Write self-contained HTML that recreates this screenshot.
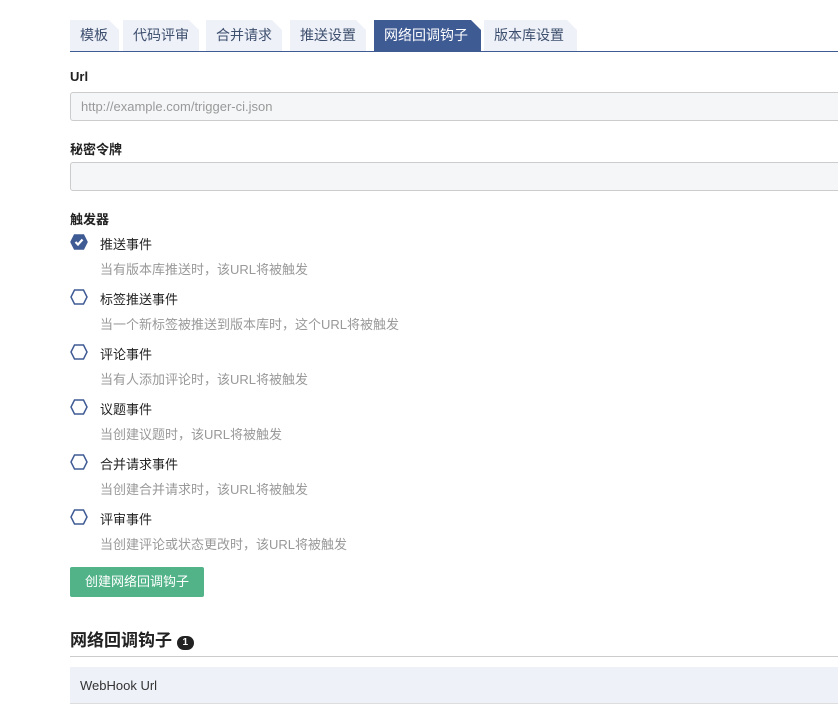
<!DOCTYPE html>
<html><head><meta charset="utf-8"><style>
body{margin:0;width:838px;height:713px;overflow:hidden;background:#fff;font-family:"Liberation Sans","Noto Sans CJK SC",sans-serif;color:#222;position:relative}
.a{position:absolute}
.tab{position:absolute;top:20px;height:31px;background:#eef1f8;color:#3d4f6e;font-size:14px;line-height:31px;padding-left:10px;box-sizing:border-box;clip-path:polygon(0 0,calc(100% - 10px) 0,100% 10px,100% 100%,0 100%)}
.tab.act{background:#3f5b94;color:#fff}
.lbl{position:absolute;left:70px;font-size:13px;font-weight:bold;color:#222}
.inp{position:absolute;left:70px;width:780px;height:29px;background:#f5f6f8;border:1px solid #ccc;border-radius:3px;box-sizing:border-box;font-size:13px;color:#999;line-height:27px;padding-left:10px}
.opt{position:absolute;left:100px;font-size:13px;color:#222}
.desc{position:absolute;left:100px;font-size:13px;color:#999}
.hex{position:absolute;left:70px}
</style></head><body>
<div class="tab" style="left:70px;width:49px">模板</div>
<div class="tab" style="left:123px;width:76px">代码评审</div>
<div class="tab" style="left:206px;width:76px">合并请求</div>
<div class="tab" style="left:290px;width:76px">推送设置</div>
<div class="tab act" style="left:374px;width:107px">网络回调钩子</div>
<div class="tab" style="left:484px;width:93px">版本库设置</div>
<div class="a" style="left:70px;top:51px;width:768px;height:1px;background:#3f5b94"></div>

<div class="lbl" style="top:69px">Url</div>
<div class="inp" style="top:92px">http://example.com/trigger-ci.json</div>
<div class="lbl" style="top:139px">秘密令牌</div>
<div class="inp" style="top:162px"></div>
<div class="lbl" style="top:209px">触发器</div>

<svg class="hex" style="top:234px" width="18" height="16" viewBox="0 0 18 16"><polygon points="4.5,1 13.5,1 17,8 13.5,15 4.5,15 1,8" fill="#3f5b94" stroke="#3f5b94" stroke-width="1.5"/><path d="M5.5 8 L8 10.5 L12.5 5.5" fill="none" stroke="#fff" stroke-width="2.2"/></svg>
<div class="opt" style="top:234px">推送事件</div>
<div class="desc" style="top:259px">当有版本库推送时，该URL将被触发</div>

<svg class="hex" style="top:289px" width="18" height="16" viewBox="0 0 18 16"><polygon points="4.5,1 13.5,1 17,8 13.5,15 4.5,15 1,8" fill="#fff" stroke="#3f5b94" stroke-width="1.5"/></svg>
<div class="opt" style="top:289px">标签推送事件</div>
<div class="desc" style="top:314px">当一个新标签被推送到版本库时，这个URL将被触发</div>

<svg class="hex" style="top:344px" width="18" height="16" viewBox="0 0 18 16"><polygon points="4.5,1 13.5,1 17,8 13.5,15 4.5,15 1,8" fill="#fff" stroke="#3f5b94" stroke-width="1.5"/></svg>
<div class="opt" style="top:344px">评论事件</div>
<div class="desc" style="top:369px">当有人添加评论时，该URL将被触发</div>

<svg class="hex" style="top:399px" width="18" height="16" viewBox="0 0 18 16"><polygon points="4.5,1 13.5,1 17,8 13.5,15 4.5,15 1,8" fill="#fff" stroke="#3f5b94" stroke-width="1.5"/></svg>
<div class="opt" style="top:399px">议题事件</div>
<div class="desc" style="top:424px">当创建议题时，该URL将被触发</div>

<svg class="hex" style="top:454px" width="18" height="16" viewBox="0 0 18 16"><polygon points="4.5,1 13.5,1 17,8 13.5,15 4.5,15 1,8" fill="#fff" stroke="#3f5b94" stroke-width="1.5"/></svg>
<div class="opt" style="top:454px">合并请求事件</div>
<div class="desc" style="top:479px">当创建合并请求时，该URL将被触发</div>

<svg class="hex" style="top:509px" width="18" height="16" viewBox="0 0 18 16"><polygon points="4.5,1 13.5,1 17,8 13.5,15 4.5,15 1,8" fill="#fff" stroke="#3f5b94" stroke-width="1.5"/></svg>
<div class="opt" style="top:509px">评审事件</div>
<div class="desc" style="top:534px">当创建评论或状态更改时，该URL将被触发</div>

<div class="a" style="left:70px;top:567px;width:134px;height:30px;background:#52b389;border-radius:2px;color:#fff;font-size:13px;line-height:30px;text-align:center">创建网络回调钩子</div>

<div class="a" style="left:70px;top:626px;font-size:17px;font-weight:bold;color:#222">网络回调钩子 <span style="display:inline-block;width:17px;height:14px;border-radius:8px;background:#222;color:#fff;font-size:10px;line-height:14px;text-align:center;vertical-align:1px">1</span></div>
<div class="a" style="left:70px;top:656px;width:768px;height:1px;background:#ccc"></div>
<div class="a" style="left:70px;top:667px;width:768px;height:37px;background:#eef1f8;border-bottom:1px solid #ddd;font-size:13px;color:#333;line-height:37px;padding-left:10px;box-sizing:border-box">WebHook Url</div>
</body></html>
